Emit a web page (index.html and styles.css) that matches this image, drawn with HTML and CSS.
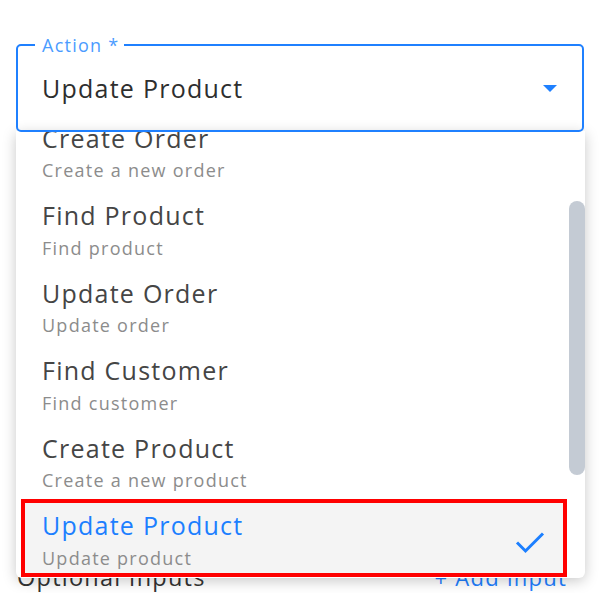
FILE: index.html
```html
<!DOCTYPE html>
<html lang="en">
<head>
<meta charset="utf-8">
<title>Action select</title>
<link rel="stylesheet" href="styles.css">
</head>
<body>
<div class="page">
  <div class="select">
    <div class="field">
      <span class="field-label">Action *</span>
      <span class="field-value">Update Product</span>
      <span class="arrow"></span>
    </div>
    <div class="menu">
      <ul class="options">
        <li class="option">
          <div class="option-text"><span class="option-title">Create Order</span><span class="option-desc">Create a new order</span></div>
        </li>
        <li class="option">
          <div class="option-text"><span class="option-title">Find Product</span><span class="option-desc">Find product</span></div>
        </li>
        <li class="option">
          <div class="option-text"><span class="option-title">Update Order</span><span class="option-desc">Update order</span></div>
        </li>
        <li class="option">
          <div class="option-text"><span class="option-title">Find Customer</span><span class="option-desc">Find customer</span></div>
        </li>
        <li class="option">
          <div class="option-text"><span class="option-title">Create Product</span><span class="option-desc">Create a new product</span></div>
        </li>
        <li class="option option-selected">
          <div class="option-text"><span class="option-title">Update Product</span><span class="option-desc">Update product</span></div>
          <svg class="check" width="30" height="24" viewBox="0 0 30 24"><polyline points="2,12.5 10.5,21 28,3.5" fill="none" stroke="#1c7fff" stroke-width="3"/></svg>
        </li>
      </ul>
      <div class="thumb"></div>
    </div>
  </div>
  <div class="inputs-row">
    <span class="inputs-title">Optional Inputs</span>
    <span class="add-input">+ Add input</span>
  </div>
</div>
</body>
</html>
```

FILE: styles.css
```css
* { box-sizing: border-box; }

html, body {
  margin: 0;
  padding: 0;
  background: #ffffff;
  overflow: hidden;
}

body {
  font-family: "Open Sans", "Noto Sans", sans-serif;
  letter-spacing: 1.25px;
}

.page {
  padding: 44px 23px 0 16px;
}

.select {
  position: relative;
  width: 568px;
}

.field {
  position: relative;
  z-index: 2;
  height: 88px;
  border: 2px solid #1f80ff;
  border-radius: 5px;
  background: transparent;
  display: flex;
  align-items: center;
  padding: 0 25px 0 24px;
}

.field-label {
  position: absolute;
  left: 17px;
  top: -13.5px;
  padding: 0 5px 0 7px;
  background: #ffffff;
  color: #4b9cff;
  font-size: 18px;
  line-height: 24px;
}

.field-value {
  flex: 1;
  font-size: 25px;
  line-height: 34px;
  color: #2e2e2e;
  margin-top: 0;
}

.arrow {
  width: 0;
  height: 0;
  border-left: 7px solid transparent;
  border-right: 7px solid transparent;
  border-top: 7px solid #1f80ff;
  margin-top: 1px;
}

.menu {
  position: absolute;
  z-index: 1;
  left: 0;
  top: 87px;
  width: 569px;
  height: 447px;
  background: #ffffff;
  border-radius: 0 0 6px 6px;
  box-shadow: 0 3px 14px rgba(0, 0, 0, 0.22);
  overflow: hidden;
}

.options {
  list-style: none;
  margin: -19.5px 0 0 0;
  padding: 0;
}

.option {
  height: 77.5px;
  padding: 10px 0 0 26px;
  display: flex;
  align-items: flex-start;
}

.option-text {
  flex: 1;
  display: flex;
  flex-direction: column;
}

.option-title {
  font-size: 25px;
  line-height: 32.5px;
  color: #454545;
}

.option-desc {
  font-size: 18px;
  line-height: 33px;
  color: #8c8c8c;
}

.option-selected {
  margin: 0 18px 0 5px;
  border: 4px solid #ff0000;
  background: #f4f4f4;
  padding: 6px 0 0 17px;
}

.option-selected .option-title {
  color: #1c7fff;
}

.check {
  margin: 21px 18px 0 0;
}

.thumb {
  position: absolute;
  right: 0;
  top: 70px;
  width: 16px;
  height: 274px;
  border-radius: 8px;
  background: #c4cbd4;
}

.inputs-row {
  margin-top: 429px;
  display: flex;
  justify-content: space-between;
  align-items: baseline;
  padding: 0 17px 0 1px;
  line-height: 32px;
}

.inputs-title {
  color: #333333;
  font-size: 23.5px;
}

.add-input {
  color: #1f80ff;
  font-size: 22px;
}
```
